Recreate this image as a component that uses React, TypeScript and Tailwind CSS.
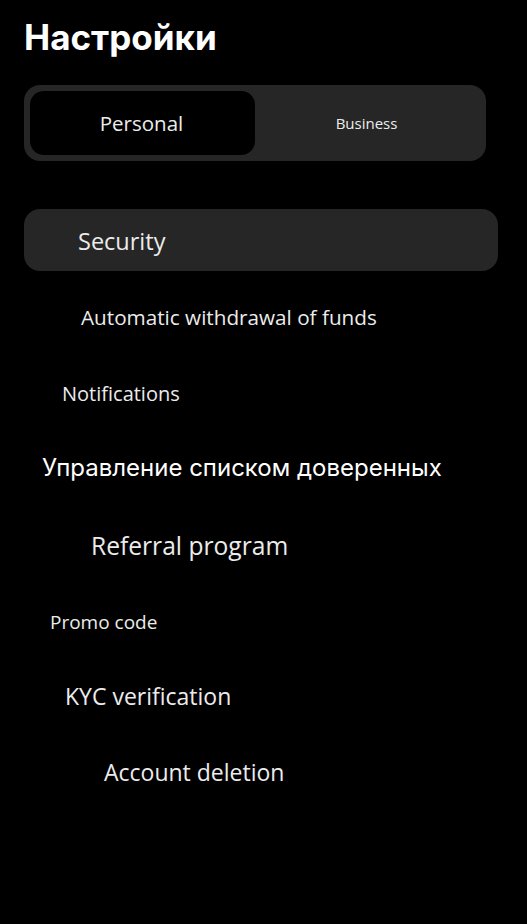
import React, { useState } from 'react';

interface MenuItem {
  id: string;
  label: string;
  // each row in the mock has its own indent and size
  className: string;
}

const items: MenuItem[] = [
  { id: 'security', label: 'Security', className: 'pl-[54px] pt-1 text-[23.5px]' },
  { id: 'autowithdraw', label: 'Automatic withdrawal of funds', className: 'pl-[57px] pt-1 text-[20.7px]' },
  { id: 'notifications', label: 'Notifications', className: 'pl-[38px] pt-1 text-[20px]' },
  { id: 'trusted', label: 'Управление списком доверенных', className: "pl-[18px] text-[24px] font-['Inter'] text-white" },
  { id: 'referral', label: 'Referral program', className: 'pl-[67px] pt-1 text-[24.6px]' },
  { id: 'promo', label: 'Promo code', className: 'pl-[26px] pt-1 text-[19px]' },
  { id: 'kyc', label: 'KYC verification', className: 'pl-[41px] text-[23px]' },
  { id: 'delete', label: 'Account deletion', className: 'pl-[80px] text-[23px]' },
];

export default function App() {
  const [tab, setTab] = useState<'personal' | 'business'>('personal');
  const [active, setActive] = useState('security');

  return (
    <div className="min-h-[924px] w-full bg-black px-6 pt-[16px] font-['Open_Sans',sans-serif] text-[#ececec]">
      {/* Header */}
      <h1 className="font-['Inter',sans-serif] text-[35px] font-bold leading-[42px] text-white">Настройки</h1>

      {/* Account type switch */}
      <div className="mt-[27px] grid w-[462px] grid-cols-2 rounded-2xl bg-[#262626] p-1.5">
        <button
          onClick={() => setTab('personal')}
          className={`h-16 rounded-[14px] pr-0.5 ${tab === 'personal' ? 'bg-black text-[20.5px]' : 'text-[15px]'}`}
        >
          Personal
        </button>
        <button
          onClick={() => setTab('business')}
          className={`h-16 rounded-[14px] pr-0.5 ${tab === 'business' ? 'bg-black text-[20.5px]' : 'text-[15px]'}`}
        >
          Business
        </button>
      </div>

      {/* Settings list */}
      <div className="mt-12 flex w-[474px] flex-col gap-[14px]">
        {items.map((item) => (
          <button
            key={item.id}
            onClick={() => setActive(item.id)}
            className={`flex h-[62px] items-center rounded-2xl text-left ${item.className} ${
              active === item.id ? 'bg-[#262626]' : ''
            }`}
          >
            {item.label}
          </button>
        ))}
      </div>
    </div>
  );
}
